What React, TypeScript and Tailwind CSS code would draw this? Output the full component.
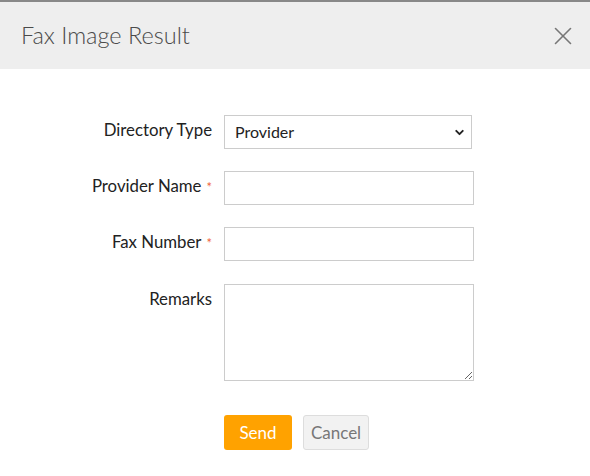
import { ChevronDown, X } from "lucide-react";

const font = { fontFamily: "Lato, 'Open Sans', sans-serif" };

function Label({ text, required }: { text: string; required?: boolean }) {
  return (
    <label className="w-[212px] shrink-0 pt-[3px] text-right text-[16.8px] leading-6 text-[#222]">
      {text}
      {required && <span className="ml-[5px] text-[13px] text-[#f0643c]">*</span>}
    </label>
  );
}

export default function App() {
  return (
    <div className="w-[590px] h-[476px] bg-white border-t-2 border-[#888]" style={font}>
      <div className="flex h-[67px] items-center justify-between bg-[#eeeeee] pl-[21px] pr-[12px]">
        <h1 className="text-[23.5px] font-light text-[#4a4a4a]">Fax Image Result</h1>
        <X className="h-[30px] w-[30px] text-[#777]" strokeWidth={1.3} />
      </div>

      <div className="flex flex-col gap-[22px] pt-[46px]">
        <div className="flex items-start">
          <Label text="Directory Type" />
          <div className="relative ml-[12px] w-[248px]">
            <select className="h-[34px] w-full appearance-none border border-[#ccc] bg-white pl-[10px] text-[16px] text-[#222] outline-none">
              <option>Provider</option>
            </select>
            <ChevronDown
              className="pointer-events-none absolute right-[6px] top-[11px] h-[13px] w-[13px] text-[#222]"
              strokeWidth={3.5}
            />
          </div>
        </div>

        <div className="flex items-start">
          <Label text="Provider Name" required />
          <input className="ml-[12px] h-[34px] w-[250px] border border-[#ccc] px-[10px] text-[16px] outline-none" />
        </div>

        <div className="flex items-start">
          <Label text="Fax Number" required />
          <input className="ml-[12px] h-[34px] w-[250px] border border-[#ccc] px-[10px] text-[16px] outline-none" />
        </div>

        <div className="mt-[1px] flex items-start">
          <Label text="Remarks" />
          <textarea className="ml-[12px] h-[97px] w-[250px] border border-[#ccc] px-[10px] text-[16px] outline-none" />
        </div>
      </div>

      <div className="mt-[34px] flex gap-[11px] pl-[224px]">
        <button className="h-[35px] w-[68px] rounded-[3px] bg-[#ffa200] text-[17px] text-white">Send</button>
        <button className="h-[35px] w-[66px] rounded-[3px] border border-[#ddd] bg-[#f2f2f2] text-[17px] text-[#777]">
          Cancel
        </button>
      </div>
    </div>
  );
}
